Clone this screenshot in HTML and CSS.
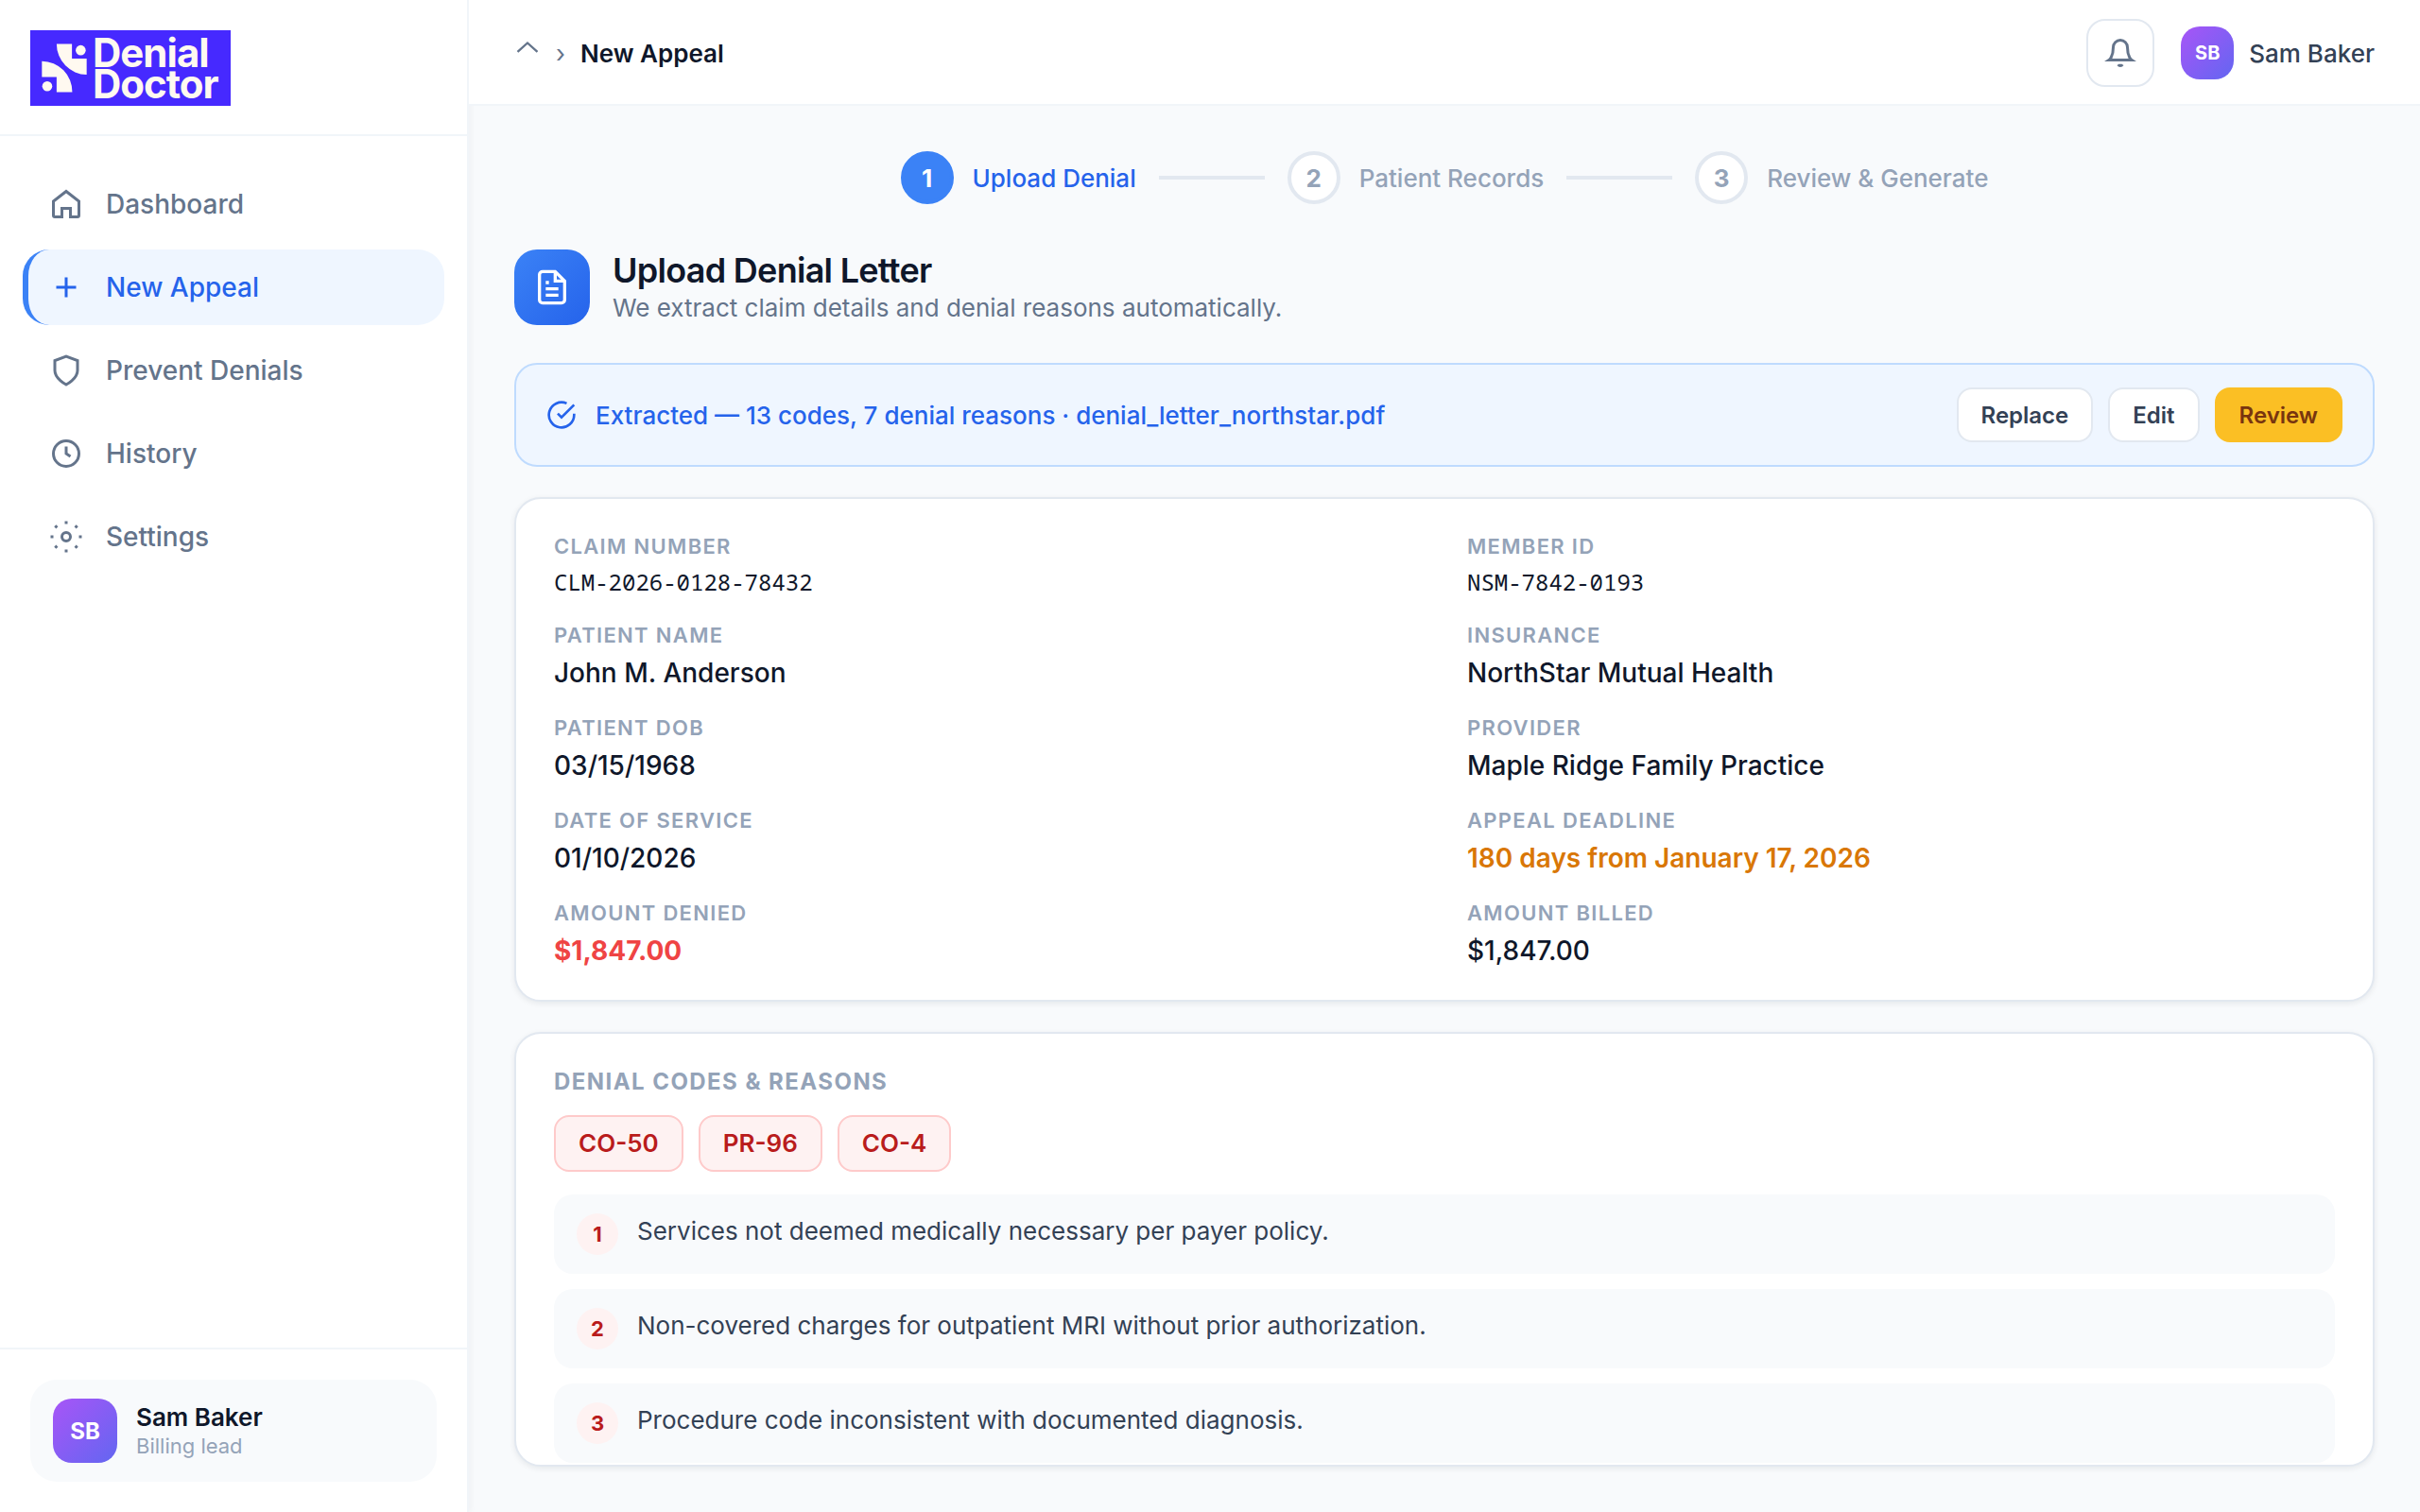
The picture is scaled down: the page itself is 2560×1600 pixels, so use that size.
FILE: index.html
```html
<!DOCTYPE html>
<html lang="en">
<head>
  <meta charset="UTF-8" />
  <meta name="viewport" content="width=device-width, initial-scale=1.0" />
  <title>New Appeal - Denial Doctor</title>
  <link rel="stylesheet" href="styles.css">
</head>

<body>
  <aside class="sidebar">
    <div class="sidebar-top">
      <a href="#" class="logo">
        <svg class="logo-mark" viewBox="36 45 145 156" aria-hidden="true">
          <path d="M84 46h49v47h47v51A97 98 0 0 1 84 46z" />
          <path d="M37 101A97 98 0 0 1 134 200H84v-48H37z" />
          <circle cx="161" cy="66" r="16" />
          <circle cx="54" cy="181" r="16" />
        </svg>
        <span class="logo-text">Denial<br>Doctor</span>
      </a>
    </div>

    <nav class="nav">
      <a href="#" class="nav-item">
        <svg class="icon" viewBox="0 0 24 24"><path d="M3 10l9-7 9 7v10a1 1 0 0 1-1 1h-5v-6H9v6H4a1 1 0 0 1-1-1z" /></svg>
        Dashboard
      </a>
      <a href="#" class="nav-item active">
        <svg class="icon" viewBox="0 0 24 24"><path d="M12 5v14M5 12h14" /></svg>
        New Appeal
      </a>
      <a href="#" class="nav-item">
        <svg class="icon" viewBox="0 0 24 24"><path d="M12 22s8-4 8-10V5l-8-3-8 3v7c0 6 8 10 8 10z" /></svg>
        Prevent Denials
      </a>
      <a href="#" class="nav-item">
        <svg class="icon" viewBox="0 0 24 24"><circle cx="12" cy="12" r="9" /><path d="M12 7v5l3 2" /></svg>
        History
      </a>
      <a href="#" class="nav-item">
        <svg class="icon" viewBox="0 0 24 24"><circle cx="12" cy="12" r="3" /><path d="M12 1v2M12 21v2M1 12h2M21 12h2M4.2 4.2l1.4 1.4M18.4 18.4l1.4 1.4M4.2 19.8l1.4-1.4M18.4 5.6l1.4-1.4" /></svg>
        Settings
      </a>
    </nav>

    <div class="sidebar-bottom">
      <div class="user-card">
        <div class="avatar avatar-lg">SB</div>
        <div>
          <div class="user-name">Sam Baker</div>
          <div class="user-role">Billing lead</div>
        </div>
      </div>
    </div>
  </aside>

  <div class="main">
    <header class="topbar">
      <div class="breadcrumb">
        <a href="#" class="crumb-home" aria-label="Home">
          <svg viewBox="0 0 24 24"><path d="M3 11l9-8 9 8" /></svg>
        </a>
        <span class="crumb-sep">›</span>
        <span class="crumb-current">New Appeal</span>
      </div>
      <div class="topbar-right">
        <button type="button" class="bell-btn" aria-label="Notifications">
          <svg class="icon" viewBox="0 0 24 24"><path d="M17 8a5 5 0 0 0-10 0c0 7-3 9-3 9h16s-3-2-3-9M10.5 20.2c.6 1 2.4 1 3 0" /></svg>
        </button>
        <div class="profile">
          <div class="avatar">SB</div>
          <span>Sam Baker</span>
        </div>
      </div>
    </header>

    <main class="page">
      <div class="stepper">
        <div class="step current"><span class="step-num">1</span>Upload Denial</div>
        <div class="step-line"></div>
        <div class="step"><span class="step-num">2</span>Patient Records</div>
        <div class="step-line"></div>
        <div class="step"><span class="step-num">3</span>Review &amp; Generate</div>
      </div>

      <div class="page-head">
        <div class="page-icon">
          <svg viewBox="0 0 24 24"><path d="M14 2H6a2 2 0 0 0-2 2v16a2 2 0 0 0 2 2h12a2 2 0 0 0 2-2V8z" /><path d="M14 2v6h6M16 13H8M16 17H8M10 9H8" /></svg>
        </div>
        <div>
          <h1>Upload Denial Letter</h1>
          <p>We extract claim details and denial reasons automatically.</p>
        </div>
      </div>

      <div class="banner">
        <svg viewBox="0 0 24 24"><path d="M22 11.1V12a10 10 0 1 1-5.9-9.1" /><path d="M22 4L12 14l-3-3" /></svg>
        <span class="banner-text">Extracted — 13 codes, 7 denial reasons · denial_letter_northstar.pdf</span>
        <div class="banner-actions">
          <button type="button" class="btn">Replace</button>
          <button type="button" class="btn">Edit</button>
          <button type="button" class="btn btn-review">Review</button>
        </div>
      </div>

      <section class="card">
        <dl class="details">
          <div><dt>Claim Number</dt><dd class="mono">CLM-2026-0128-78432</dd></div>
          <div><dt>Member ID</dt><dd class="mono">NSM-7842-0193</dd></div>
          <div><dt>Patient Name</dt><dd>John M. Anderson</dd></div>
          <div><dt>Insurance</dt><dd>NorthStar Mutual Health</dd></div>
          <div><dt>Patient DOB</dt><dd>03/15/1968</dd></div>
          <div><dt>Provider</dt><dd>Maple Ridge Family Practice</dd></div>
          <div><dt>Date of Service</dt><dd>01/10/2026</dd></div>
          <div><dt>Appeal Deadline</dt><dd class="deadline">180 days from January 17, 2026</dd></div>
          <div><dt>Amount Denied</dt><dd class="denied">$1,847.00</dd></div>
          <div><dt>Amount Billed</dt><dd>$1,847.00</dd></div>
        </dl>
      </section>

      <section class="card card-codes">
        <h2>Denial Codes &amp; Reasons</h2>
        <div class="codes">
          <span class="code">CO-50</span>
          <span class="code">PR-96</span>
          <span class="code">CO-4</span>
        </div>
        <ol class="reasons">
          <li><span class="reason-num">1</span>Services not deemed medically necessary per payer policy.</li>
          <li><span class="reason-num">2</span>Non-covered charges for outpatient MRI without prior authorization.</li>
          <li><span class="reason-num">3</span>Procedure code inconsistent with documented diagnosis.</li>
        </ol>
      </section>
    </main>
  </div>
</body>
</html>
```

FILE: styles.css
```css
/* === Basic Reset === */
* {
  margin: 0;
  padding: 0;
  box-sizing: border-box;
}

body {
  font-family: Inter, sans-serif;
  font-size: 26px;
  background: #f8fafc;
  color: #0f172a;
  height: 100vh;
  display: flex;
}

a {
  text-decoration: none;
  color: inherit;
}

button {
  font-family: inherit;
  cursor: pointer;
}

svg {
  display: block;
  flex-shrink: 0;
  fill: none;
  stroke: currentColor;
  stroke-width: 2;
}

.icon {
  width: 36px;
  height: 36px;
}

/* === Sidebar === */
.sidebar {
  width: 496px;
  flex-shrink: 0;
  display: flex;
  flex-direction: column;
  background: #fff;
  border-right: 2px solid #f1f5f9;
  box-shadow: 2px 0 6px rgba(15, 23, 42, 0.04);
}

.sidebar-top {
  padding: 32px 32px 30px;
  border-bottom: 2px solid #f1f5f9;
}

.logo {
  display: inline-flex;
  align-items: center;
  gap: 6px;
  height: 80px;
  width: 212px;
  padding-left: 12px;
  background: #4629ff;
  color: #fff9f0;
  vertical-align: top;
}

.logo-mark {
  width: 48px;
  height: 52px;
  fill: currentColor;
  stroke: none;
}

.logo-text {
  font-size: 42px;
  font-weight: 700;
  line-height: 33px;
  letter-spacing: -1px;
}

.nav {
  flex: 1;
  display: flex;
  flex-direction: column;
  gap: 8px;
  padding: 32px 24px;
}

.nav-item {
  display: flex;
  align-items: center;
  gap: 24px;
  height: 80px;
  padding: 0 22px;
  border-left: 6px solid transparent;
  border-radius: 28px;
  font-size: 28px;
  font-weight: 500;
  color: #64748b;
}

.nav-item.active {
  background: #eff6ff;
  border-left-color: #3b82f6;
  color: #2563eb;
}

.sidebar-bottom {
  padding: 32px;
  border-top: 2px solid #f1f5f9;
}

.user-card {
  display: flex;
  align-items: center;
  gap: 20px;
  padding: 20px 24px;
  background: #f8fafc;
  border-radius: 28px;
}

.avatar {
  display: flex;
  align-items: center;
  justify-content: center;
  width: 56px;
  height: 56px;
  border-radius: 20px;
  background: linear-gradient(135deg, #a855f7, #6366f1);
  color: #fff;
  font-size: 20px;
  font-weight: 700;
}

.avatar-lg {
  width: 68px;
  height: 68px;
  font-size: 24px;
}

.user-name {
  font-weight: 600;
  line-height: 32px;
}

.user-role {
  font-size: 22px;
  line-height: 28px;
  color: #94a3b8;
}

/* === Top bar === */
.main {
  flex: 1;
  min-width: 0;
  display: flex;
  flex-direction: column;
}

.topbar {
  display: flex;
  align-items: center;
  justify-content: space-between;
  padding: 20px 48px 18px;
  background: #fff;
  border-bottom: 2px solid #f1f5f9;
}

.breadcrumb {
  display: flex;
  align-items: center;
  gap: 16px;
  color: #64748b;
}

.crumb-home svg {
  width: 28px;
  height: 28px;
}

.crumb-current {
  font-weight: 600;
  color: #0f172a;
}

.topbar-right {
  display: flex;
  align-items: center;
  gap: 28px;
}

.bell-btn {
  display: flex;
  align-items: center;
  justify-content: center;
  width: 72px;
  height: 72px;
  background: #fff;
  border: 2px solid #e2e8f0;
  border-radius: 20px;
  color: #64748b;
}

.profile {
  display: flex;
  align-items: center;
  gap: 16px;
  font-weight: 500;
  color: #334155;
}

/* === Page === */
.page {
  flex: 1;
  min-height: 0;
  display: flex;
  flex-direction: column;
  padding: 48px;
}

.stepper {
  display: flex;
  align-items: center;
  justify-content: center;
  gap: 24px;
  margin-bottom: 48px;
}

.step {
  display: flex;
  align-items: center;
  gap: 20px;
  font-weight: 500;
  color: #94a3b8;
}

.step-num {
  display: flex;
  align-items: center;
  justify-content: center;
  width: 56px;
  height: 56px;
  border: 4px solid #e2e8f0;
  border-radius: 50%;
  background: #fff;
  font-size: 26px;
  font-weight: 700;
}

.step.current {
  color: #2563eb;
}

.step.current .step-num {
  background: #3b82f6;
  border-color: #3b82f6;
  color: #fff;
}

.step-line {
  width: 112px;
  height: 4px;
  background: #e2e8f0;
}

.page-head {
  display: flex;
  align-items: center;
  gap: 24px;
  margin-bottom: 40px;
}

.page-icon {
  display: flex;
  align-items: center;
  justify-content: center;
  width: 80px;
  height: 80px;
  border-radius: 24px;
  background: linear-gradient(135deg, #3b82f6, #2563eb);
  color: #fff;
}

.page-icon svg {
  width: 40px;
  height: 40px;
}

h1 {
  font-size: 36px;
  font-weight: 600;
  line-height: 44px;
  letter-spacing: -0.02em;
}

.page-head p {
  line-height: 36px;
  color: #64748b;
}

/* === Extraction banner === */
.banner {
  display: flex;
  align-items: center;
  gap: 20px;
  margin-bottom: 32px;
  padding: 24px 32px;
  background: #eff6ff;
  border: 2px solid #bfdbfe;
  border-radius: 24px;
  color: #2563eb;
}

.banner svg {
  width: 32px;
  height: 32px;
}

.banner-text {
  flex: 1;
  font-weight: 500;
}

.banner-actions {
  display: flex;
  gap: 16px;
}

.btn {
  height: 58px;
  padding: 0 24px;
  background: #fff;
  border: 2px solid #e2e8f0;
  border-radius: 16px;
  font-size: 24px;
  font-weight: 600;
  color: #334155;
}

.btn-review {
  background: #fbbf24;
  border-color: #fbbf24;
  color: #78350f;
}

/* === Cards === */
.card {
  padding: 36px 40px 34px;
  background: #fff;
  border: 2px solid #e2e8f0;
  border-radius: 28px;
  box-shadow: 0 2px 6px rgba(15, 23, 42, 0.08);
}

.details {
  display: grid;
  grid-template-columns: 1fr 1fr;
  gap: 26px 48px;
}

dt {
  margin-bottom: 8px;
  font-size: 22px;
  font-weight: 600;
  line-height: 28px;
  letter-spacing: 0.06em;
  text-transform: uppercase;
  color: #94a3b8;
}

dd {
  font-size: 28px;
  font-weight: 500;
  line-height: 36px;
}

.mono {
  font-family: "Noto Sans Mono", "DejaVu Sans Mono", monospace;
  font-size: 24px;
  font-weight: 400;
  line-height: 32px;
}

.deadline {
  font-weight: 600;
  color: #d97706;
}

.denied {
  font-weight: 700;
  color: #ef4444;
}

.card-codes {
  flex: 1;
  min-height: 0;
  margin-top: 32px;
  overflow: hidden;
}

h2 {
  margin-bottom: 20px;
  font-size: 24px;
  font-weight: 700;
  line-height: 30px;
  letter-spacing: 0.06em;
  text-transform: uppercase;
  color: #94a3b8;
}

.codes {
  display: flex;
  gap: 16px;
  margin-bottom: 24px;
}

.code {
  padding: 0 24px;
  border: 2px solid #fecaca;
  border-radius: 16px;
  background: #fef2f2;
  font-weight: 600;
  line-height: 56px;
  color: #b91c1c;
}

.reasons {
  display: flex;
  flex-direction: column;
  gap: 16px;
  list-style: none;
}

.reasons li {
  display: flex;
  gap: 20px;
  padding: 20px 24px;
  border-radius: 20px;
  background: #f8fafc;
  line-height: 38px;
  color: #334155;
}

.reason-num {
  width: 44px;
  height: 44px;
  border-radius: 50%;
  background: #fef2f2;
  font-size: 22px;
  font-weight: 700;
  line-height: 44px;
  text-align: center;
  color: #b91c1c;
}
```
